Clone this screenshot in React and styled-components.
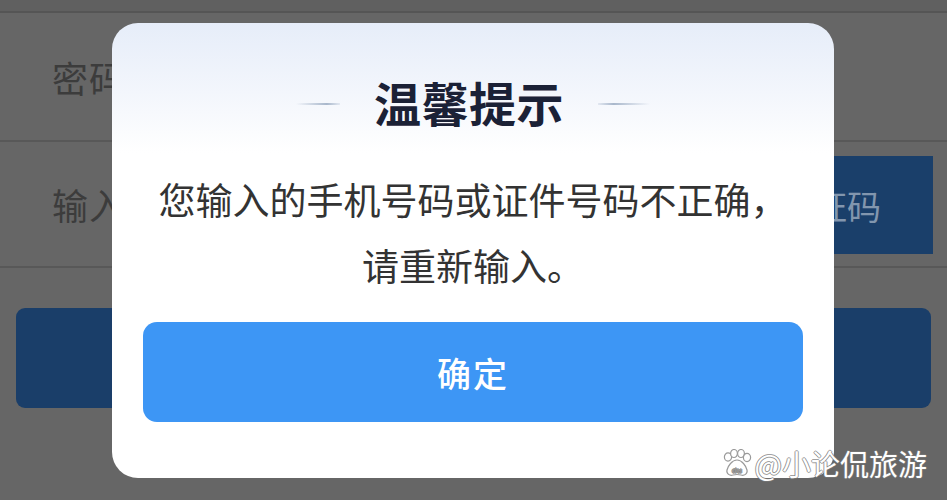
import React from 'react'
import styled, { createGlobalStyle } from 'styled-components'

const GlobalStyle = createGlobalStyle`
  html, body {
    margin: 0;
    padding: 0;
    width: 947px;
    height: 500px;
    overflow: hidden;
    background: #666666;
    font-family: "Noto Sans CJK SC", "Noto Sans", sans-serif;
  }
`

const Page = styled.div`
  position: relative;
  width: 947px;
  height: 500px;
  background: #666666;
  overflow: hidden;
`

const TopBar = styled.div`
  height: 11px;
  background: #606060;
  border-bottom: 2px solid #555555;
`

const FormRow = styled.div`
  display: flex;
  align-items: center;
  justify-content: space-between;
  height: ${p => p.h}px;
  padding: 0 14px 0 52px;
  border-bottom: 2px solid #585858;
`

const Label = styled.span`
  font-size: 36px;
  color: #3c3c3c;
  letter-spacing: 1px;
`

const CodeButton = styled.div`
  display: flex;
  align-items: center;
  justify-content: flex-end;
  box-sizing: border-box;
  width: 240px;
  height: 98px;
  margin-top: 2px;
  padding-right: 52px;
  background: #1a3f6a;
  color: #8296ae;
  font-size: 34px;
`

const LoginButton = styled.div`
  margin: 40px 16px 0;
  height: 100px;
  border-radius: 9px;
  background: #1a3e69;
`

const Modal = styled.div`
  position: absolute;
  left: 112px;
  top: 23px;
  width: 722px;
  height: 455px;
  box-sizing: border-box;
  border-radius: 26px;
  background: linear-gradient(180deg, #e6edf9 0px, #f3f6fc 70px, #ffffff 130px);
  display: flex;
  flex-direction: column;
  padding: 53px 31px 56px;
`

const TitleRow = styled.div`
  display: flex;
  align-items: center;
  justify-content: center;
  gap: 34px;
  height: 52px;
`

const Deco = styled.span`
  width: ${p => p.w}px;
  height: 2px;
  margin-top: 4px;
  background: linear-gradient(
    ${p => (p.side === 'left' ? '90deg' : '270deg')},
    rgba(170, 185, 205, 0) 0%,
    rgba(160, 176, 198, 0.9) 70%,
    rgba(200, 210, 225, 0.4) 100%
  );
`

const Title = styled.h1`
  margin: 0;
  font-size: 47px;
  line-height: 52px;
  font-weight: 700;
  color: #1b2136;
  letter-spacing: 0.5px;
`

const Message = styled.p`
  margin: 38px 0 0;
  font-size: 37px;
  line-height: 66px;
  color: #333333;
  text-align: center;
  white-space: nowrap;
`

const Confirm = styled.button`
  margin-top: 24px;
  height: 100px;
  border: none;
  border-radius: 14px;
  background: #3d96f5;
  color: #ffffff;
  font-family: inherit;
  font-size: 34px;
  font-weight: 500;
  letter-spacing: 2px;
  cursor: pointer;
`

const Watermark = styled.div`
  position: absolute;
  right: 20px;
  bottom: 22px;
  display: flex;
  align-items: center;
  gap: 3px;
  font-size: 29px;
  line-height: 30px;
  color: #ffffff;
  text-shadow:
    1px 0 0 rgba(120, 120, 120, 0.7),
    -1px 0 0 rgba(120, 120, 120, 0.7),
    0 1px 0 rgba(120, 120, 120, 0.7),
    0 -1px 0 rgba(120, 120, 120, 0.7);
`

const Paw = () => (
  <svg width="30" height="28" viewBox="0 0 30 28">
    <g fill="#ffffff" stroke="#9a9a9a" strokeWidth="1.2">
      <ellipse cx="6" cy="8" rx="3.6" ry="4.2" />
      <ellipse cx="12" cy="4.5" rx="3.4" ry="4" />
      <ellipse cx="19" cy="4.5" rx="3.4" ry="4" />
      <ellipse cx="25" cy="8.5" rx="3.6" ry="4.2" />
      <path d="M15 11 C10 11 6 17 5 21 C4 25 8 27 11 26 C13 25.5 17 25.5 19 26 C22 27 26 25 25 21 C24 17 20 11 15 11 Z" />
    </g>
    <text x="15" y="24" textAnchor="middle" fontSize="8" fontWeight="700" fill="#9a9a9a" fontFamily="Liberation Sans, sans-serif">du</text>
  </svg>
)

const App = () => {
  return (
    <Page>
      <GlobalStyle />
      <TopBar />
      <FormRow h={127}>
        <Label>密码</Label>
      </FormRow>
      <FormRow h={124}>
        <Label>输入验证码</Label>
        <CodeButton>获取验证码</CodeButton>
      </FormRow>
      <LoginButton />

      <Modal>
        <TitleRow>
          <Deco side="left" w={44} />
          <Title>温馨提示</Title>
          <Deco side="right" w={52} />
        </TitleRow>
        <Message>
          您输入的手机号码或证件号码不正确，
          <br />
          请重新输入。
        </Message>
        <Confirm>确定</Confirm>
      </Modal>

      <Watermark>
        <Paw />
        <span>@小论侃旅游</span>
      </Watermark>
    </Page>
  )
}

export default App
